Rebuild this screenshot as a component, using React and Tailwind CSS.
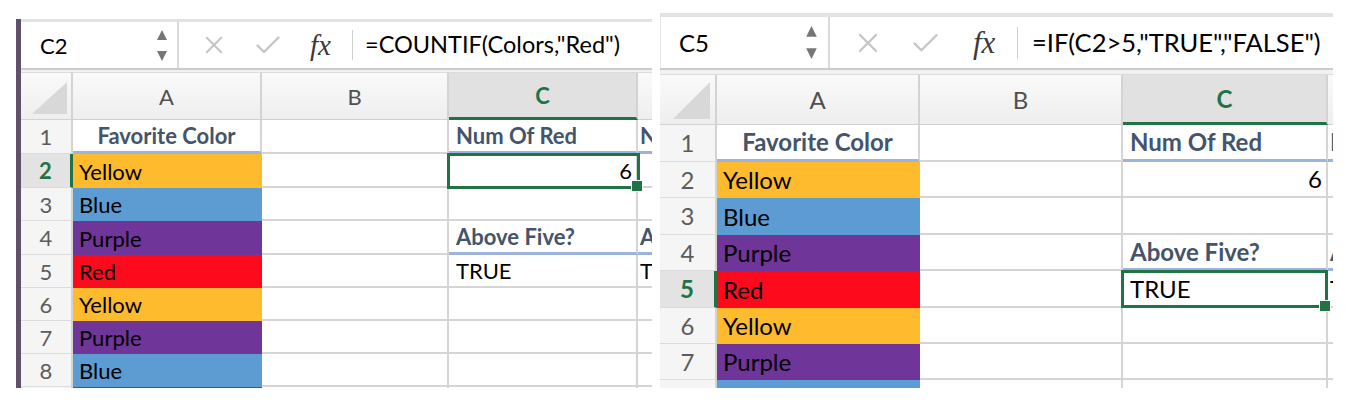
import React from 'react';

const FILL = {
  Yellow: 'bg-[#fdbb2d]',
  Blue: 'bg-[#5d9bd3]',
  Purple: 'bg-[#6f3598]',
  Red: 'bg-[#fe0a1d]',
};

function XIcon({ cls }) {
  return (
    <svg className={cls} viewBox="0 0 20 20" fill="none" stroke="#c4c4c4" strokeWidth="2.2" strokeLinecap="round">
      <path d="M2 2 L18 18 M18 2 L2 18" />
    </svg>
  );
}

function CheckIcon({ cls }) {
  return (
    <svg className={cls} viewBox="0 0 24 18" fill="none" stroke="#c4c4c4" strokeWidth="2.2" strokeLinecap="round" strokeLinejoin="round">
      <path d="M1.5 9.5 L8 16 L22.5 1.5" />
    </svg>
  );
}

function Stepper({ cls }) {
  return (
    <svg className={cls} viewBox="0 0 10 31">
      <path d="M5 0 L10 10 L0 10 Z" fill="#767676" />
      <path d="M5 31 L10 21 L0 21 Z" fill="#767676" />
    </svg>
  );
}

function Corner({ cls }) {
  return (
    <svg className={cls} viewBox="0 0 10 10" preserveAspectRatio="none">
      <path d="M10 0 L10 10 L0 10 Z" fill="#d8d8d8" />
    </svg>
  );
}

function Selection({ p }) {
  return (
    <div className={`pointer-events-none absolute z-10 border-[3px] border-[#217346] ${p.selBox}`}>
      <div className={`absolute h-[10px] w-[10px] bg-[#217346] ring-1 ring-white ${p.handle}`} />
    </div>
  );
}

function Panel({ p }) {
  const colA = ['Favorite Color', 'Yellow', 'Blue', 'Purple', 'Red', 'Yellow', 'Purple', p.last[0], p.last[1]];
  const colC = ['Num Of Red', '6', '', 'Above Five?', 'TRUE', '', '', '', ''];
  const colD = ['N', '', '', 'A', 'T', '', '', '', ''];
  return (
    <div className={`flex shrink-0 flex-col overflow-hidden font-['Lato',sans-serif] ${p.box}`}>
      <div className="flex min-h-0 flex-1">
        {p.leftBar && <div className="w-[5px] shrink-0 bg-[#5e5169]" />}
        <div className="flex min-w-0 flex-1 flex-col">
          <div className={`shrink-0 bg-[#e2e2e2] ${p.topLine}`} />
          <div className={`flex shrink-0 items-center bg-white ${p.fb}`}>
            <div className={`flex h-full shrink-0 items-center justify-between ${p.nameBox}`}>
              <span className={`text-black ${p.font}`}>{p.name}</span>
              <Stepper cls={p.stepper} />
            </div>
            <div className="h-full w-[2px] shrink-0 bg-[#dadada]" />
            <XIcon cls={p.x} />
            <CheckIcon cls={p.check} />
            <span className={`inline-block shrink-0 font-['Liberation_Serif',serif] italic leading-none text-[#3a3a3a] ${p.fx}`}>fx</span>
            <div className={`w-px shrink-0 bg-[#cfcfcf] ${p.smallDiv}`} />
            <span className={`whitespace-nowrap text-black ${p.formulaCls}`}>{p.formula}</span>
          </div>
          <div className={`shrink-0 border-t-2 border-b border-t-[#cbcbcb] border-b-[#dcdcdc] bg-[#f1f1f1] ${p.sep}`} />
          <div className={`flex shrink-0 ${p.hdrH}`}>
            <div className={`flex shrink-0 items-end justify-end border-r-2 border-b border-[#d3d3d3] bg-gradient-to-b from-[#fafafa] to-[#eeeeee] ${p.cols[0]} ${p.cornerPad}`}>
              <Corner cls={p.tri} />
            </div>
            {['A', 'B', 'C', ''].map((L, i) => {
              const sel = L === 'C';
              return (
                <div
                  key={i}
                  className={`flex shrink-0 items-center justify-center overflow-hidden border-[#d3d3d3] ${i < 3 ? 'border-r-2' : ''} ${p.cols[i + 1]} ${p.font} ${
                    sel
                      ? 'border-b-[3px] border-b-[#217346] bg-[#e1e1e1] font-bold text-[#217346]'
                      : 'border-b border-b-[#d0d0d0] bg-gradient-to-b from-[#fafafa] to-[#eeeeee] text-[#4f4f4f]'
                  }`}
                >
                  {L}
                </div>
              );
            })}
          </div>
          {p.rows.map((h, r) => {
            const rowSel = r + 1 === p.selRow;
            const a = colA[r];
            const c = colC[r];
            const d = colD[r];
            const hdr = r === 0 || r === 3;
            return (
              <div key={r} className={`flex shrink-0 ${h}`}>
                <div
                  className={`flex shrink-0 items-center justify-center border-b border-[#dcdcdc] ${p.cols[0]} ${p.font} ${
                    rowSel
                      ? 'border-r-[3px] border-r-[#217346] bg-[#e3e3e3] font-bold text-[#217346]'
                      : 'border-r-2 border-r-[#d3d3d3] bg-[#f5f5f5] text-[#5c5c5c]'
                  }`}
                >
                  {r + 1}
                </div>
                {r === 0 ? (
                  <div className={`flex shrink-0 items-center justify-center border-r-2 border-b-[3px] border-r-[#d5d5d5] border-b-[#9cb3dd] bg-white font-bold text-[#44546a] ${p.cols[1]} ${p.font}`}>
                    {a}
                  </div>
                ) : (
                  <div className={`flex shrink-0 items-center pl-[6px] text-black ${FILL[a]} ${p.cols[1]} ${p.font}`}>{a}</div>
                )}
                <div className={`shrink-0 border-r-2 border-b-2 border-[#d5d5d5] bg-white ${p.cols[2]}`} />
                <div
                  className={`relative flex shrink-0 items-center border-r-2 bg-white px-[7px] ${p.cols[3]} ${p.font} ${
                    c === '6' ? 'justify-end pr-[4px]' : ''
                  } ${hdr ? 'border-b-[3px] border-r-[#d5d5d5] border-b-[#9cb3dd] font-bold text-[#44546a]' : 'border-b-2 border-[#d5d5d5] text-black'}`}
                >
                  {c}
                  {r + 1 === p.selRow && <Selection p={p} />}
                </div>
                <div
                  className={`flex shrink-0 items-center overflow-hidden whitespace-nowrap bg-white pl-[2px] ${p.cols[4]} ${p.font} ${
                    hdr ? 'border-b-[3px] border-b-[#9cb3dd] font-bold text-[#44546a]' : 'border-b-2 border-[#d5d5d5] text-black'
                  }`}
                >
                  {d}
                </div>
              </div>
            );
          })}
        </div>
      </div>
    </div>
  );
}

const P1 = {
  box: 'mt-[19px] w-[636px] h-[369px]',
  leftBar: true,
  topLine: 'h-[3px]',
  fb: 'h-[46px]',
  nameBox: 'w-[156px] pl-[19px] pr-[10px]',
  name: 'C2',
  font: 'text-[22px]',
  stepper: 'h-[31px] w-[10px]',
  x: 'ml-[26px] h-[18px] w-[18px] shrink-0',
  check: 'ml-[33px] h-[18px] w-[24px] shrink-0',
  fx: 'ml-[30px] w-[27px] text-[29px]',
  smallDiv: 'ml-[15px] h-[30px]',
  formulaCls: 'ml-[12px] text-[23.5px]',
  formula: '=COUNTIF(Colors,"Red")',
  sep: 'h-[5px]',
  hdrH: 'h-[47px]',
  cols: ['w-[52px]', 'w-[189px]', 'w-[187px]', 'w-[189px]', 'w-[14px]'],
  cornerPad: 'pr-[4px] pb-[5px]',
  tri: 'h-[32px] w-[35px]',
  rows: ['h-[34px]', 'h-[34px]', 'h-[33px]', 'h-[34px]', 'h-[33px]', 'h-[33px]', 'h-[33px]', 'h-[33px]', 'h-[33px]'],
  last: ['Blue', 'Red'],
  selRow: 2,
  selBox: '-left-[2px] -top-[1px] -right-[4px] -bottom-[3px]',
  handle: '-right-[5px] -bottom-[5px]',
};

const P2 = {
  box: 'ml-[8px] mt-[13px] w-[673px] h-[375px]',
  leftBar: false,
  topLine: 'h-[4px]',
  fb: 'h-[51px]',
  nameBox: 'w-[168px] pl-[18px] pr-[11px] border-l border-[#e6e6e6]',
  name: 'C5',
  font: 'text-[24px]',
  stepper: 'h-[33px] w-[11px]',
  x: 'ml-[28px] h-[20px] w-[20px] shrink-0',
  check: 'ml-[35px] h-[20px] w-[25px] shrink-0',
  fx: 'ml-[35px] w-[30px] text-[31px]',
  smallDiv: 'ml-[14px] h-[32px]',
  formulaCls: 'ml-[14px] text-[25.5px]',
  formula: '=IF(C2>5,"TRUE","FALSE")',
  sep: 'h-[7px]',
  hdrH: 'h-[50px]',
  cols: ['w-[57px]', 'w-[203px]', 'w-[203px]', 'w-[205px]', 'w-[5px]'],
  cornerPad: 'pr-[5px] pb-[5px]',
  tri: 'h-[37px] w-[37px]',
  rows: ['h-[37px]', 'h-[36px]', 'h-[37px]', 'h-[36px]', 'h-[37px]', 'h-[36px]', 'h-[36px]', 'h-[36px]', 'h-[36px]'],
  last: ['Blue', 'Red'],
  selRow: 5,
  selBox: '-left-[2px] -top-[1px] -right-[2px] -bottom-[2px]',
  handle: '-right-[5px] -bottom-[6px]',
};

export default function App() {
  return (
    <div className="flex h-[410px] w-[1372px] items-start overflow-hidden bg-white pl-[16px]">
      <Panel p={P1} />
      <Panel p={P2} />
    </div>
  );
}
